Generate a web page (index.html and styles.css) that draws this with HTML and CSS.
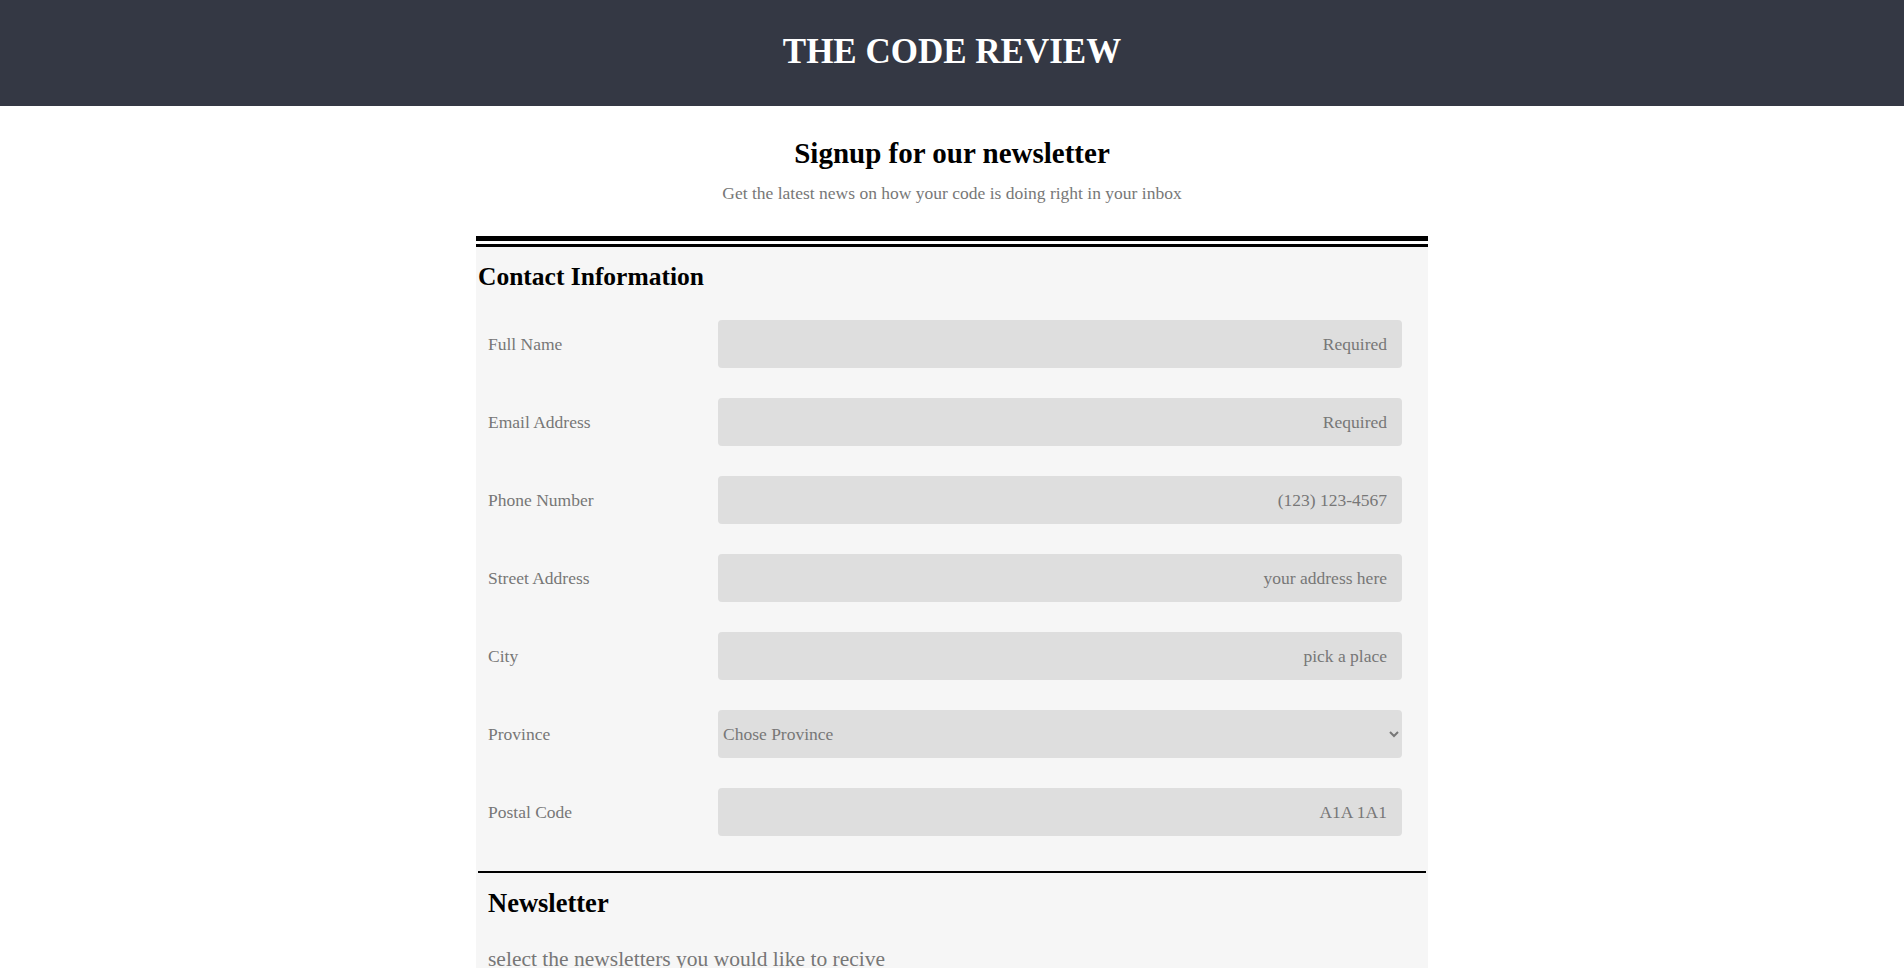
FILE: index.html
```html
<!DOCTYPE html>
<html lang="en">
<head>
<meta charset="utf-8">
<title>The Code Review</title>
<link rel="stylesheet" href="styles.css">
</head>
<body>
<header class="masthead">
  <h1 class="masthead-title">THE CODE REVIEW</h1>
</header>
<main class="container">
  <section class="intro">
    <h2 class="intro-title">Signup for our newsletter</h2>
    <p class="intro-text">Get the latest news on how your code is doing right in your inbox</p>
  </section>
  <div class="rule-thick"></div>
  <form class="panel">
    <fieldset class="contact">
      <h3 class="section-title">Contact Information</h3>
      <div class="rows">
        <div class="row">
          <label class="label" for="name">Full Name</label>
          <input class="field" id="name" type="text" placeholder="Required">
        </div>
        <div class="row">
          <label class="label" for="email">Email Address</label>
          <input class="field" id="email" type="email" placeholder="Required">
        </div>
        <div class="row">
          <label class="label" for="phone">Phone Number</label>
          <input class="field" id="phone" type="tel" placeholder="(123) 123-4567">
        </div>
        <div class="row">
          <label class="label" for="street">Street Address</label>
          <input class="field" id="street" type="text" placeholder="your address here">
        </div>
        <div class="row">
          <label class="label" for="city">City</label>
          <input class="field" id="city" type="text" placeholder="pick a place">
        </div>
        <div class="row">
          <label class="label" for="province">Province</label>
          <select class="field select" id="province">
            <option>Chose Province</option>
            <option>Ontario</option>
            <option>Quebec</option>
          </select>
        </div>
        <div class="row">
          <label class="label" for="postal">Postal Code</label>
          <input class="field" id="postal" type="text" placeholder="A1A 1A1">
        </div>
      </div>
    </fieldset>
    <fieldset class="newsletter">
      <h3 class="section-title newsletter-title">Newsletter</h3>
      <p class="newsletter-text">select the newsletters you would like to recive</p>
    </fieldset>
  </form>
</main>
</body>
</html>
```

FILE: styles.css
```css
* { box-sizing: border-box; }

body {
  margin: 0;
  font-family: "Liberation Serif", "Times New Roman", serif;
  background: #ffffff;
  color: #000;
}

.masthead {
  height: 106px;
  background: #343844;
  display: flex;
  align-items: center;
  justify-content: center;
  padding-bottom: 2px;
}

.masthead-title {
  margin: 0;
  color: #ffffff;
  font-size: 35px;
  line-height: 40px;
  font-weight: bold;
}

.container {
  width: 50%;
  margin: 0 auto;
}

.intro {
  text-align: center;
  padding-top: 32px;
}

.intro-title {
  margin: 0;
  font-size: 29px;
  line-height: 30px;
  font-weight: bold;
}

.intro-text {
  margin: 15px 0 0;
  font-size: 17.5px;
  line-height: 20px;
  color: #777777;
}

.rule-thick {
  margin-top: 33px;
  border-top: 5px solid #000;
  margin-bottom: 3px;
}

.panel {
  border-top: 3px solid #000;
  background: #f6f6f6;
}

.contact,
.newsletter {
  border: 0;
  margin: 0 2px;
  padding: 0;
  min-width: 0;
}

.contact {
  border-bottom: 2px solid #000;
  padding-bottom: 35px;
}

.section-title {
  margin: 0;
  padding-top: 18px;
  font-size: 25.5px;
  line-height: 24px;
  font-weight: bold;
}

.rows {
  margin-top: 31px;
  display: flex;
  flex-direction: column;
  gap: 30px;
  padding-left: 10px;
  padding-right: 24px;
}

.row {
  display: grid;
  grid-template-columns: 230px 1fr;
  align-items: center;
}

.label {
  font-size: 17.5px;
  color: #777777;
}

.field {
  height: 48px;
  width: 100%;
  border: 0;
  border-radius: 4px;
  background: #dedede;
  font-family: inherit;
  font-size: 17.5px;
  color: #777777;
  text-align: right;
  padding: 0 15px 0 4px;
  outline: none;
}

.field::placeholder {
  color: #777777;
  opacity: 1;
}

.select {
  text-align: left;
  padding: 0 11px 0 1px;
}

.newsletter-title {
  padding-left: 10px;
  font-size: 26.5px;
}

.newsletter-text {
  margin: 32px 0 0;
  padding-left: 10px;
  font-size: 21.5px;
  line-height: 24px;
  color: #777777;
}
```
